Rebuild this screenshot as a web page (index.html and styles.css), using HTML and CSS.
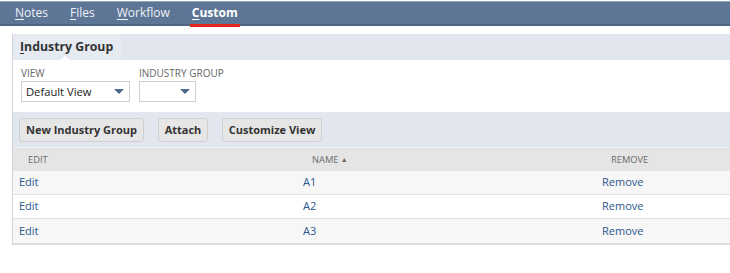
FILE: index.html
```html
<!DOCTYPE html>
<html>
<head>
<meta charset="utf-8">
<link rel="stylesheet" href="styles.css">
</head>
<body>
<div class="topbar">
  <nav class="nav">
    <a class="nav-item"><u>N</u>otes</a>
    <a class="nav-item"><u>F</u>iles</a>
    <a class="nav-item"><u>W</u>orkflow</a>
    <a class="nav-item active"><u>C</u>ustom</a>
  </nav>
</div>
<div class="panel">
  <div class="tabbar">
    <div class="tab"><u>I</u>ndustry Group</div>
  </div>
  <div class="filters">
    <div class="field">
      <div class="label">VIEW</div>
      <div class="select select-view"><span>Default View</span><span class="arrow"></span></div>
    </div>
    <div class="field">
      <div class="label">INDUSTRY GROUP</div>
      <div class="select select-group"><span></span><span class="arrow"></span></div>
    </div>
  </div>
  <div class="buttonbar">
    <button class="btn btn-new">New Industry Group</button>
    <button class="btn btn-attach">Attach</button>
    <button class="btn btn-cust">Customize View</button>
  </div>
  <div class="table">
    <div class="row head">
      <div class="cell c1">EDIT</div>
      <div class="cell c2">NAME <span class="sort">▲</span></div>
      <div class="cell c3">REMOVE</div>
    </div>
    <div class="row odd">
      <div class="cell c1"><a>Edit</a></div>
      <div class="cell c2"><a>A1</a></div>
      <div class="cell c3"><a>Remove</a></div>
    </div>
    <div class="row even">
      <div class="cell c1"><a>Edit</a></div>
      <div class="cell c2"><a>A2</a></div>
      <div class="cell c3"><a>Remove</a></div>
    </div>
    <div class="row odd last">
      <div class="cell c1"><a>Edit</a></div>
      <div class="cell c2"><a>A3</a></div>
      <div class="cell c3"><a>Remove</a></div>
    </div>
  </div>
</div>
</body>
</html>
```

FILE: styles.css
```css
* { box-sizing: border-box; }
html, body { margin: 0; padding: 0; background: #fff; }
body {
  font-family: "Open Sans", "Liberation Sans", sans-serif;
  width: 730px;
  height: 273px;
  overflow: hidden;
  color: #333;
}
u { text-decoration: underline; text-underline-offset: 2px; text-decoration-thickness: 1px; }

.topbar {
  margin-top: 1px;
  height: 25px;
  background: #5e7696;
  border-top: 1px solid #93a4bb;
  border-bottom: 2px solid #4f6584;
}
.nav { display: flex; padding-left: 15px; height: 100%; }
.nav-item {
  position: relative;
  color: #eef1f6;
  font-size: 12px;
  line-height: 22px;
  margin-right: 22px;
  white-space: nowrap;
}
.nav-item.active { font-weight: 700; color: #fff; }
.nav-item.active::after {
  content: "";
  position: absolute;
  left: -2px;
  right: -2px;
  bottom: -3px;
  height: 3px;
  background: #e3241d;
}

.panel {
  margin: 8px 0 0 12px;
  border-left: 1px solid #d0d4da;
  border-bottom: 2px solid #dcdcdc;
}
.tabbar {
  height: 26px;
  background: #e1e6ef;
  display: flex;
}
.tab {
  position: relative;
  width: 108px;
  background: #e6eaf1;
  font-weight: 700;
  font-size: 12.3px;
  line-height: 26px;
  padding-left: 7px;
  color: #333;
  white-space: nowrap;
}
.tab::after {
  content: "";
  position: absolute;
  left: 47px;
  bottom: 0;
  border-left: 5px solid transparent;
  border-right: 5px solid transparent;
  border-bottom: 4px solid #fff;
}

.filters {
  display: flex;
  gap: 9px;
  padding: 7px 0 0 8px;
  height: 52px;
}
.label {
  font-size: 10px;
  color: #666;
  line-height: 13px;
  height: 14px;
  white-space: nowrap;
}
.select {
  display: flex;
  align-items: center;
  justify-content: space-between;
  height: 21px;
  border: 1px solid #cfcfcf;
  background: #fff;
  font-size: 11.2px;
  color: #222;
  padding: 0 4px 0 4px;
  white-space: nowrap;
}
.select-view { width: 109px; }
.select-group { width: 57px; }
.arrow {
  width: 0; height: 0;
  border-left: 5px solid transparent;
  border-right: 5px solid transparent;
  border-top: 5px solid #4d6990;
  margin-right: 1px;
}

.buttonbar {
  background: #e1e6ef;
  height: 36px;
  display: flex;
  align-items: center;
  gap: 14px;
  padding-left: 6px;
  border-bottom: 1px solid #eef1f6;
}
.btn {
  font-family: "Open Sans", "Liberation Sans", sans-serif;
  font-weight: 700;
  font-size: 11px;
  color: #333;
  background: #e6e6e6;
  border: 1px solid #cfcfcf;
  border-radius: 3px;
  height: 24px;
  padding: 0;
  white-space: nowrap;
}
.btn-new { width: 125px; }
.btn-attach { width: 50px; }
.btn-cust { width: 100px; }

.row { display: flex; height: 24px; align-items: center; border-bottom: 1px solid #e3e3e3; }
.row.last { border-bottom: none; }
.row.head { height: 23px; background: #e5e5e5; font-size: 9.3px; color: #6b6b6b; border-bottom: none; }
.row.odd { background: #f7f7f7; }
.row.even { background: #fff; }
.cell { flex: none; white-space: nowrap; line-height: 18px; padding-bottom: 3px; }
.head .cell { padding-bottom: 0; }
.c1 { width: 284px; }
.c2 { width: 299px; }
.c3 { flex: 1; }
.head .cell { padding-left: 15px; }
.row:not(.head) .cell { padding-left: 6px; }
.sort { font-size: 7px; vertical-align: 1px; }
.cell a { color: #2b568e; font-size: 11px; }
```
